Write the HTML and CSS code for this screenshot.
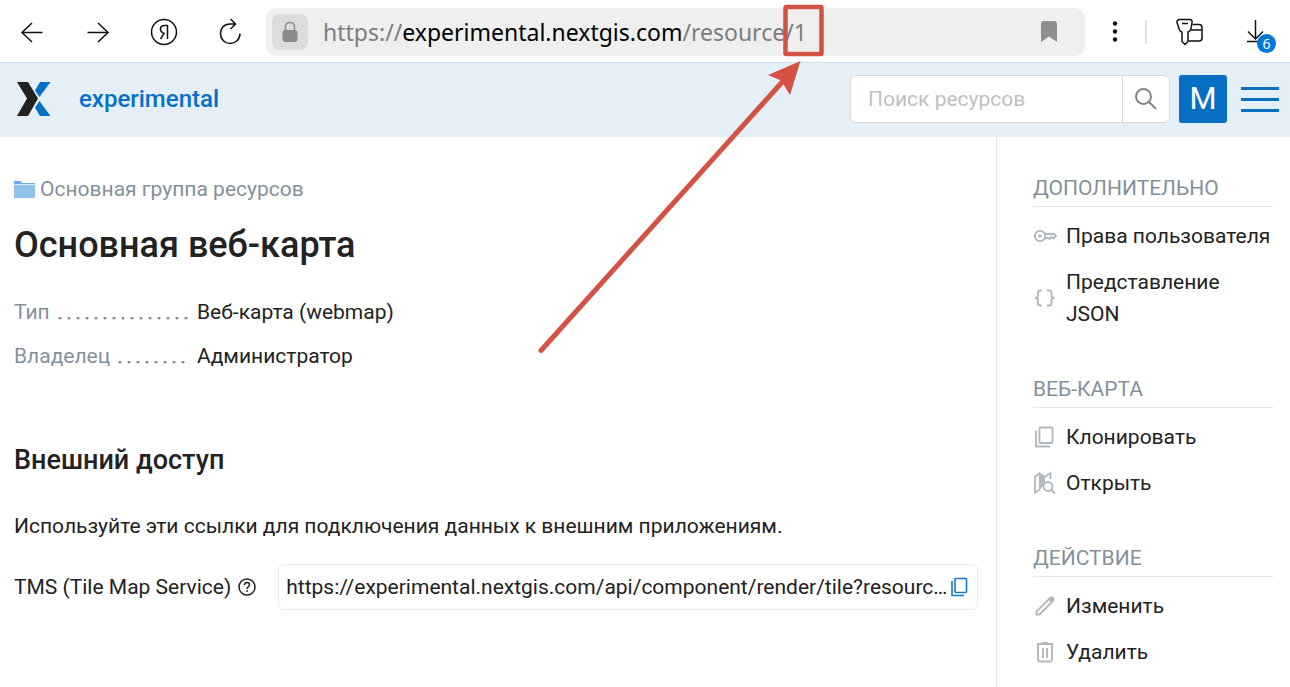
FILE: index.html
```html
<!DOCTYPE html>
<html lang="ru">
<head>
<meta charset="utf-8">
<title>Основная веб-карта</title>
<link rel="stylesheet" href="styles.css">
</head>
<body>
<div class="browser">
  <nav class="browser-nav">
    <button class="tool" aria-label="Назад"><svg width="24" height="24" viewBox="0 0 24 24"><path d="M22.500 12.500H2M12 3L2 12.500L12 22"/></svg></button>
    <button class="tool" aria-label="Вперёд"><svg width="24" height="24" viewBox="0 0 24 24"><path d="M1.500 12.500H22M12 3L22 12.500L12 22"/></svg></button>
    <button class="tool" aria-label="Яндекс"><svg width="28" height="28" viewBox="0 0 28 28"><circle cx="14" cy="14" r="12.500"/><path d="M17.500 21V7.500H14.500C9.500 7.500 9.500 13 12.500 14.500L14 15.500L10.500 21"/></svg></button>
    <button class="tool" aria-label="Обновить"><svg width="26" height="28" viewBox="0 0 26 28"><path d="M18.500 6H13C6.500 6 3.500 11 3.500 15.500C3.500 21.500 8 25.500 13 25.500C18.500 25.500 23 21.500 23 15.500M13.500 1L18.500 6L13.500 11"/></svg></button>
  </nav>
  <div class="address">
    <span class="lock"><svg width="18" height="22" viewBox="0 0 18 22"><path d="M4.500 10V6C4.500 0 13.500 0 13.500 6V10" fill="none" stroke="#8a8a8a" stroke-width="1.500"/><rect x="1.500" y="9" width="15" height="12" rx="3" fill="#8a8a8a"/></svg></span>
    <span class="url">https://<b>experimental.nextgis.com</b>/resource/1</span>
    <svg width="16" height="22" viewBox="0 0 16 22"><path d="M0 3Q0 0 3 0H13Q16 0 16 3V21L8 15.500L0 21Z" fill="#8f8f8f"/></svg>
  </div>
  <div class="browser-tools">
    <button class="tool" aria-label="Меню"><svg class="solid" width="6" height="22" viewBox="0 0 6 22"><circle cx="3" cy="2.500" r="2.200"/><circle cx="3" cy="10.500" r="2.200"/><circle cx="3" cy="18.500" r="2.200"/></svg></button>
    <span class="divider"></span>
    <button class="tool" aria-label="Пароли"><svg width="28" height="28" viewBox="0 0 28 28"><path d="M16.500 6.500H23Q26 6.500 26 9.500V20Q26 23 23 23H12.500M15 12H26"/><path d="M4 1.500H13.500Q16.500 1.500 16 4.500L15 10.500Q14.500 13.500 12 14V23.500L9 26.500L6 23.500V14Q3.500 13.500 3 10.500L1 4.500Q.500 1.500 4 1.500Z" fill="#fff"/><path d="M6 5.500H12"/></svg></button>
    <button class="tool downloads" aria-label="Загрузки"><svg width="20" height="24" viewBox="0 0 20 24"><path d="M9.500 0V19M2 11.500L9.500 19L17 11.500M1 21.500H14"/></svg><span class="badge">6</span></button>
  </div>
</div>

<header class="header">
  <a class="brand" href="#">
    <svg width="34" height="34" viewBox="0 0 34 34"><path d="M0 0H11L21 16.500L11 34H0L10 16.500Z" fill="#222"/><path d="M23 0H33.500L22.500 15L18 8.500ZM22.500 19L33.500 34H23L18 25.500Z" fill="#0770c5"/></svg>
    <span>experimental</span>
  </a>
  <form class="search">
    <input type="text" placeholder="Поиск ресурсов" aria-label="Поиск ресурсов">
    <button type="button" aria-label="Найти"><svg width="24" height="24" viewBox="0 0 24 24" fill="none" stroke="#858585" stroke-width="2"><circle cx="9.500" cy="9.500" r="7.500"/><path d="M15 15L22 22"/></svg></button>
  </form>
  <button class="avatar">M</button>
  <button class="burger" aria-label="Меню сайта"><span></span><span></span><span></span></button>
</header>

<div class="page">
  <main class="content">
    <a class="crumb" href="#"><svg width="21" height="19" viewBox="0 0 21 19"><path d="M0 1H6L8 3H21V18H0Z" fill="#8fc3ea"/><path d="M0 1H6L8 3H21V5H0Z" fill="#67ade0"/><path d="M0 4.500H21" stroke="#d7eaf8"/></svg>Основная группа ресурсов</a>
    <h1>Основная веб-карта</h1>
    <dl class="facts">
      <dt><span>Тип</span><i></i></dt><dd>Веб-карта (webmap)</dd>
      <dt><span>Владелец</span><i></i></dt><dd>Администратор</dd>
    </dl>
    <h2>Внешний доступ</h2>
    <p class="hint">Используйте эти ссылки для подключения данных к внешним приложениям.</p>
    <div class="service">
      <span class="service-name">TMS (Tile Map Service)
        <svg width="18" height="18" viewBox="0 0 18 18" fill="none" stroke="#222" stroke-width="1.500"><circle cx="9" cy="9" r="8"/><path d="M6.500 7C6.500 3.500 11.500 3.500 11.500 7C11.500 8.700 9 8.500 9 11M9 12.300V14"/></svg>
      </span>
      <div class="link-box">
        <span class="link-text">https://experimental.nextgis.com/api/component/render/tile?resourc…</span>
        <button aria-label="Копировать"><svg width="17" height="20" viewBox="0 0 17 20" fill="none" stroke="#1677c9" stroke-width="1.600"><rect x="4" y="1.500" width="11.500" height="14" rx="1"/><path d="M1 4V18.500H13"/></svg></button>
      </div>
    </div>
  </main>

  <aside class="sidebar">
    <section>
      <h3>ДОПОЛНИТЕЛЬНО</h3>
      <a href="#"><svg viewBox="0 0 24 24"><circle cx="7" cy="12" r="5.200"/><circle class="dot" cx="7" cy="12" r="1.800"/><path d="M12 10H21L23 12L20.500 14.500L18.500 13L16.500 15L14.500 13.500L12 15"/></svg><span>Права пользователя</span></a>
      <a href="#"><svg viewBox="0 0 24 24"><path d="M9 4.500H7Q5 4.500 5 6.500V9.500Q5 12 2 12Q5 12 5 14.500V17.500Q5 19.500 7 19.500H9M14 4.500H16.500Q18.500 4.500 18.500 6.500V9.500Q18.500 12 21.500 12Q18.500 12 18.500 14.500V17.500Q18.500 19.500 16.500 19.500H14"/></svg><span>Представление JSON</span></a>
    </section>
    <section>
      <h3>ВЕБ-КАРТА</h3>
      <a href="#"><svg viewBox="0 0 24 24"><rect x="6.500" y="2.500" width="13" height="15.500" rx="1"/><path d="M3 5.500V21.500H17"/></svg><span>Клонировать</span></a>
      <a href="#"><svg viewBox="0 0 24 24"><path d="M6.500 2L2 6V21.500L6.500 19"/><path class="dot" d="M6 1L12 5V12L7 19H6Z"/><path d="M12 6L17.500 2V8"/><circle cx="15" cy="15.500" r="4.500"/><path d="M18.500 19L22 22.500"/></svg><span>Открыть</span></a>
    </section>
    <section>
      <h3>ДЕЙСТВИЕ</h3>
      <a href="#"><svg viewBox="0 0 24 24"><path d="M3.500 20.500V17.500L16 5L19 8L6.500 20.500Z"/><path class="dot" d="M15 5L17 3Q19 1.500 20.500 3Q22.500 5 21 7L19 9Z"/></svg><span>Изменить</span></a>
      <a href="#"><svg viewBox="0 0 24 24"><path d="M5 4.500V20Q5 21.500 6.500 21.500H17.500Q19 21.500 19 20V4.500M4 4H20M9 3H15M10 8V18M14 8V18"/></svg><span>Удалить</span></a>
    </section>
  </aside>
</div>

<svg class="annotation" width="300" height="360" viewBox="530 0 300 360"><rect x="785.500" y="7" width="36" height="47" rx="1" fill="none" stroke="#d35244" stroke-width="4.500"/><path d="M541 350.500L784 80" stroke="#d35244" stroke-width="5" stroke-linecap="round"/><path d="M800.500 61L768 75L781 80.500L790 95Z" fill="#d35244"/></svg>
</body>
</html>
```
FILE: styles.css
```css
* { box-sizing: border-box; }
body {
  margin: 0;
  min-height: 100vh;
  display: flex;
  flex-direction: column;
  position: relative;
  background: #fff;
  color: #222;
  font: 21px/32px Roboto, sans-serif;
}
button { border: 0; padding: 0; background: none; font: inherit; display: grid; place-items: center; }
a { color: inherit; text-decoration: none; }
svg { display: block; flex: none; }
h1, h2, h3, p, dl, dd { margin: 0; }

.browser { display: flex; align-items: center; height: 63px; padding-top: 2px; border-bottom: 1px solid #cfdfea; }
.browser-nav { display: flex; gap: 26px; padding: 0 16px 0 12px; }
.tool { width: 40px; height: 40px; }
.tool svg { fill: none; stroke: #111; stroke-width: 1.5px; }
.tool .solid { fill: #111; stroke: none; }
.address {
  flex: 1;
  display: flex;
  align-items: center;
  height: 48px;
  padding: 0 28px 0 6px;
  border-radius: 10px;
  background: #efefef;
}
.lock { display: grid; place-items: center; width: 36px; height: 36px; border-radius: 8px; background: #dcdcdc; }
.url { flex: 1; margin-left: 15px; color: #7d7d7d; font: 23px/32px "Noto Sans", sans-serif; }
.url b { color: #000; font-weight: 400; }
.browser-tools { display: flex; align-items: center; padding: 0 14px 0 10px; }
.divider { width: 2px; height: 24px; margin: 0 23px 0 10px; background: #e2e2e2; }
.downloads { position: relative; margin-left: 26px; }
.badge {
  position: absolute;
  right: 0;
  bottom: -1px;
  width: 19px;
  height: 19px;
  border-radius: 50%;
  background: #0078d8;
  color: #fff;
  font: 14px/19px "Noto Sans", sans-serif;
}

.header { display: flex; align-items: center; height: 74px; padding: 0 11px 2px 17px; background: #e5eff8; }
.brand { display: flex; align-items: center; gap: 28px; margin-right: auto; color: #0770c5; font-size: 24px; font-weight: 500; }
.search { display: flex; width: 320px; height: 48px; border: 1px solid #d9d9d9; border-radius: 6px; background: #fff; }
.search input { flex: 1; min-width: 0; border: 0; padding: 0 17px; background: none; outline: 0; font: inherit; }
.search input::placeholder { color: #bfbfbf; }
.search button { width: 47px; border-left: 1px solid #d9d9d9; }
.avatar { width: 48px; height: 48px; margin: 0 14px 0 9px; border-radius: 3px; background: #0770c5; color: #fff; font-size: 31px; }
.burger { width: 38px; gap: 8px; }
.burger span { width: 100%; height: 3px; background: #0770c5; }

.page { flex: 1; display: flex; }
.content { flex: 1; min-width: 0; padding: 36px 18px 0 14px; }
.crumb { display: flex; align-items: center; gap: 5px; color: #84909b; }
h1 { margin-top: 16px; font-size: 36px; line-height: 48px; font-weight: 500; }
.facts { display: grid; grid-template-columns: 175px 1fr; gap: 12px 8px; margin-top: 27px; }
.facts dt { display: flex; align-items: center; gap: 8px; color: #84909b; }
.facts i {
  flex: 1;
  height: 3px;
  margin-top: 12px;
  background: radial-gradient(circle at 2px 1px, #84909b 1px, transparent 2px) 0 0 / 9px 3px;
}
h2 { margin-top: 72px; font-size: 27px; line-height: 32px; font-weight: 500; }
.hint { margin-top: 34px; }
.service { display: flex; align-items: center; gap: 22px; margin-top: 22px; }
.service-name { display: flex; align-items: center; gap: 7px; }
.link-box { flex: 1; min-width: 0; display: flex; align-items: center; height: 46px; padding: 0 9px 0 7px; border: 1px solid #ebebeb; border-radius: 6px; }
.link-text { flex: 1; min-width: 0; overflow: hidden; white-space: nowrap; text-overflow: ellipsis; }

.sidebar { width: 294px; padding: 35px 17px 0 36px; border-left: 1px solid #e6e6e6; }
.sidebar section { margin-bottom: 36px; }
.sidebar h3 { margin-bottom: 6px; padding-bottom: 2px; border-bottom: 1px solid #e6e6e6; color: #84909b; font-size: 21px; font-weight: 400; }
.sidebar a { display: flex; align-items: center; gap: 9px; padding: 7px 0; }
.sidebar svg { width: 24px; height: 24px; fill: none; stroke: #b0b7bd; stroke-width: 1.8px; }
.sidebar .dot { fill: #b0b7bd; stroke: none; }

.annotation { position: absolute; left: 530px; top: 0; pointer-events: none; }
```
